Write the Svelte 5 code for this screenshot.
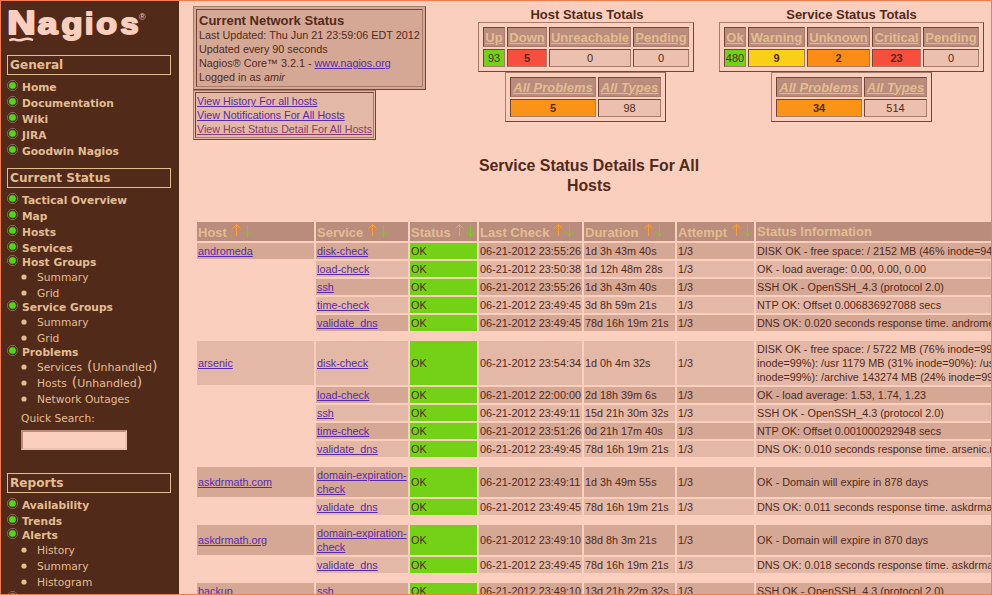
<script>
  const general = ['Home', 'Documentation', 'Wiki', 'JIRA', 'Goodwin Nagios'].map((t) => ({ t, h: 16 }));
  const status = [
    { t: 'Tactical Overview', h: 16 },
    { t: 'Map', h: 16 },
    { t: 'Hosts', h: 16 },
    { t: 'Services', h: 14 },
    { t: 'Host Groups', h: 15 },
    { t: 'Summary', h: 16, sub: true },
    { t: 'Grid', h: 14, sub: true },
    { t: 'Service Groups', h: 15 },
    { t: 'Summary', h: 16, sub: true },
    { t: 'Grid', h: 14, sub: true },
    { t: 'Problems', h: 15 },
    { t: 'Services', h: 16, sub: true, extra: 'Unhandled' },
    { t: 'Hosts', h: 16, sub: true, extra: 'Unhandled' },
    { t: 'Network Outages', h: 16, sub: true }
  ];
  const reports = [
    { t: 'Availability', h: 16 },
    { t: 'Trends', h: 14 },
    { t: 'Alerts', h: 15 },
    { t: 'History', h: 16, sub: true },
    { t: 'Summary', h: 16, sub: true },
    { t: 'Histogram', h: 16, sub: true },
    { t: '', h: 16 }
  ];

  const totals = [
    {
      title: 'Host Status Totals',
      kind: 'host',
      cells: [
        ['Up', '93', 'green'],
        ['Down', '5', 'red'],
        ['Unreachable', '0', ''],
        ['Pending', '0', '']
      ],
      sum: [
        ['All Problems', '5', 'orange'],
        ['All Types', '98', '']
      ]
    },
    {
      title: 'Service Status Totals',
      kind: 'service',
      cells: [
        ['Ok', '480', 'green'],
        ['Warning', '9', 'yellow'],
        ['Unknown', '2', 'orange deep'],
        ['Critical', '23', 'red'],
        ['Pending', '0', '']
      ],
      sum: [
        ['All Problems', '34', 'orange'],
        ['All Types', '514', '']
      ]
    }
  ];

  // label and the width it takes before its sort arrows
  const columns = [
    ['Host', 34],
    ['Service', 51],
    ['Status', 44],
    ['Last Check', 74],
    ['Duration', 59],
    ['Attempt', 54]
  ];

  const hosts = [
    {
      name: 'andromeda',
      rows: [
        ['disk-check', '23:55:26', '1d 3h 43m 40s', ['DISK OK - free space: / 2152 MB (46% inode=94%']],
        ['load-check', '23:50:38', '1d 12h 48m 28s', ['OK - load average: 0.00, 0.00, 0.00']],
        ['ssh', '23:55:26', '1d 3h 43m 40s', ['SSH OK - OpenSSH_4.3 (protocol 2.0)']],
        ['time-check', '23:49:45', '3d 8h 59m 21s', ['NTP OK: Offset 0.006836927088 secs']],
        ['validate_dns', '23:49:45', '78d 16h 19m 21s', ['DNS OK: 0.020 seconds response time. androme']]
      ]
    },
    {
      name: 'arsenic',
      rows: [
        ['disk-check', '23:54:34', '1d 0h 4m 32s', [
          'DISK OK - free space: / 5722 MB (76% inode=99%',
          'inode=99%): /usr 1179 MB (31% inode=90%): /us',
          'inode=99%): /archive 143274 MB (24% inode=99%'
        ]],
        ['load-check', '22:00:00', '2d 18h 39m 6s', ['OK - load average: 1.53, 1.74, 1.23']],
        ['ssh', '23:49:11', '15d 21h 30m 32s', ['SSH OK - OpenSSH_4.3 (protocol 2.0)']],
        ['time-check', '23:51:26', '0d 21h 17m 40s', ['NTP OK: Offset 0.001000292948 secs']],
        ['validate_dns', '23:49:45', '78d 16h 19m 21s', ['DNS OK: 0.010 seconds response time. arsenic.m']]
      ]
    },
    {
      name: 'askdrmath.com',
      rows: [
        ['domain-expiration-check', '23:49:11', '1d 3h 49m 55s', ['OK - Domain will expire in 878 days']],
        ['validate_dns', '23:49:45', '78d 16h 19m 21s', ['DNS OK: 0.011 seconds response time. askdrmat']]
      ]
    },
    {
      name: 'askdrmath.org',
      rows: [
        ['domain-expiration-check', '23:49:10', '38d 8h 3m 21s', ['OK - Domain will expire in 870 days']],
        ['validate_dns', '23:49:45', '78d 16h 19m 21s', ['DNS OK: 0.018 seconds response time. askdrmat']]
      ]
    },
    {
      name: 'backup',
      rows: [['ssh', '23:49:10', '13d 21h 22m 32s', ['SSH OK - OpenSSH_4.3 (protocol 2.0)']]]
    }
  ];

  let n = 0;
  const groups = hosts.map((h) => ({ ...h, rows: h.rows.map((r) => ({ r, dark: n++ % 2 === 0 })) }));
</script>

{#snippet menu(items)}
  <ul class="menu">
    {#each items as it}
      <li class:sub={it.sub} style="height: {it.h}px">
        {#if it.sub}
          <svg class="bullet" width="6" height="6"><circle cx="3" cy="3" r="2.6" /></svg>
        {:else}
          <svg class="dot" width="11" height="11" viewBox="0 0 11 11">
            <path d="M3.5 .5h4l3 3v4l-3 3h-4l-3-3v-4z" fill="none" stroke="#8c5c5c" />
            <circle cx="5.5" cy="5.5" r="4" fill="#3c5a12" />
            <circle cx="5.5" cy="5.5" r="3.3" fill="#50d41c" />
          </svg>
        {/if}
        <a href="#top">{it.t}</a>{#if it.extra}<span class="extra">(<a href="#top">{it.extra}</a>)</span>{/if}
      </li>
    {/each}
  </ul>
{/snippet}

{#snippet grid(cells, cls)}
  <div class="totals {cls}">
    {#each cells as c}<div class="th"><a href="#top">{c[0]}</a></div>{/each}
    {#each cells as c}<div class="td {c[2]}">{c[1]}</div>{/each}
  </div>
{/snippet}

<div class="page">
  <nav>
    <svg class="logo" width="150" height="40" viewBox="0 0 150 40">
      <g class="letters">
        <text class="cap" x="0.3" y="28" textLength="28.5" lengthAdjust="spacingAndGlyphs">N</text>
        <text x="30.8" y="28" textLength="19.7" lengthAdjust="spacingAndGlyphs">a</text>
        <text x="54.6" y="28" textLength="21" lengthAdjust="spacingAndGlyphs">g</text>
        <text x="77.9" y="28">i</text>
        <text x="89.2" y="28" textLength="20.7" lengthAdjust="spacingAndGlyphs">o</text>
        <text x="113.5" y="28" textLength="18" lengthAdjust="spacingAndGlyphs">s</text>
      </g>
      <text class="reg" x="132" y="13.5">®</text>
      <path d="M3.300 34q3-1.300 6-.2t7-.3 8.700.1" fill="none" stroke="#fbcfbe" stroke-width="2.500" stroke-linecap="round" />
    </svg>
    <h2>General</h2>
    {@render menu(general)}
    <h2 class="second">Current Status</h2>
    {@render menu(status)}
    <label class="search">Quick Search:<input type="text" /></label>
    <h2 class="third">Reports</h2>
    {@render menu(reports)}
  </nav>

  <main>
    <header>
      <div class="left">
        <div class="info">
          <div class="inner">
            <strong>Current Network Status</strong>
            <div>Last Updated: Thu Jun 21 23:59:06 EDT 2012</div>
            <div>Updated every 90 seconds</div>
            <div>Nagios® Core™ 3.2.1 - <a href="#top">www.nagios.org</a></div>
            <div>Logged in as <i>amir</i></div>
          </div>
        </div>
        <div class="links">
          <div class="inner">
            <a href="#top">View History For all hosts</a>
            <a href="#top">View Notifications For All Hosts</a>
            <a href="#top" class="visited">View Host Status Detail For All Hosts</a>
          </div>
        </div>
      </div>
      {#each totals as t}
        <section class={t.kind}>
          <h3>{t.title}</h3>
          {@render grid(t.cells, 'main-' + t.kind)}
          {@render grid(t.sum, 'sum')}
        </section>
      {/each}
    </header>

    <h1>Service Status Details For All Hosts</h1>

    <div class="table">
      <div class="row head">
        {#each columns as [label, w]}
          <div class="hc">
            <span style="width: {w}px">{label}</span>
            <svg width="21" height="13" viewBox="0 0 21 13" fill="none">
              <path d="M4.500 0v12M.5 4.500L4.500 .5l4 4" stroke="#ff9c38" />
              <path d="M15.500 1v12M11.500 8l4 4 4-4" stroke="#74d216" />
            </svg>
          </div>
        {/each}
        <div class="hc last">Status Information</div>
      </div>
      {#each groups as g}
        <div class="group">
          {#each g.rows as { r, dark }, i}
            <div class="row" class:dark>
              {#if i === 0}<div><a href="#top">{g.name}</a></div>{:else}<div class="blank"></div>{/if}
              <div><a href="#top">{r[0]}</a></div>
              <div class="ok">OK</div>
              <div class="date">06-21-2012 {r[1]}</div>
              <div class="nw">{r[2]}</div>
              <div>1/3</div>
              <div class="msg">{#each r[3] as line}<span>{line}</span>{/each}</div>
            </div>
          {/each}
        </div>
      {/each}
    </div>
  </main>
</div>

<style>
  :global(body) { margin: 0; }
  .page {
    box-sizing: border-box; width: 992px; height: 595px; overflow: hidden; display: flex;
    border: 1px solid #f57c4e; background: #fbcfbe; color: #522a1a;
    font: 10.82px/14px "Liberation Sans", Arial, sans-serif;
  }
  a { color: #5a2aaa; }
  nav {
    width: 178px; flex: none; box-sizing: border-box; padding: 5px 8px 0 6px; background: #522a1a;
    color: #e3bd92; font-family: "DejaVu Sans", Verdana, sans-serif; font-size: 10.67px;
  }
  nav a { color: inherit; text-decoration: none; }
  .logo { display: block; margin-bottom: 9px; overflow: visible; }
  .letters { font: bold 30px "Liberation Sans", Arial, sans-serif; fill: #fbcfbe; stroke: #fbcfbe; stroke-width: 2; stroke-linejoin: round; }
  .cap { font-size: 33px; }
  .reg { font: 9px "Liberation Sans", Arial, sans-serif; fill: #fbcfbe; }
  h2 {
    box-sizing: border-box; width: 164px; height: 20px; margin: 0 0 4px; padding-left: 2px;
    border: 1px solid #e3bd92; font-size: 12.1px; line-height: 19px;
  }
  .second { margin-top: 9px; }
  .third { margin-top: 23px; }
  .menu { list-style: none; margin: 0; padding: 0; }
  li { display: flex; align-items: flex-start; line-height: 18px; font-weight: bold; white-space: pre; }
  li.sub { font-weight: normal; padding-left: 14px; }
  .dot { margin: 1px 4px 0 0; flex: none; }
  .bullet { margin: 5px 10px 0 0; fill: #e3bd92; flex: none; }
  .extra { font-size: 14px; margin: -2px 0 0 5px; }
  .extra a { font-size: 11px; }
  .search { display: flex; flex-direction: column; margin: 3px 0 0 14px; line-height: 18px; }
  .search input {
    box-sizing: border-box; width: 106px; height: 20px; margin: 2px 0 0; padding: 0; background: #fbcfbe;
    border: 2px solid; border-color: #b98c7b #ecc0ae #ecc0ae #b98c7b; border-radius: 0;
  }

  main { flex: none; width: 812px; }
  header { display: flex; height: 155px; }
  .left { box-sizing: border-box; width: 299px; padding: 5px 0 0 14px; display: flex; flex-direction: column; align-items: flex-start; flex: none; }
  .info, .links { box-sizing: border-box; border: 1px solid; border-color: #a87c6b #744535 #744535 #a87c6b; white-space: nowrap; }
  .info { width: 233px; height: 84px; padding: 2px; background: #d5a896; }
  .links { width: 183px; height: 50px; padding: 1px; background: #e3b8a7; font-size: 10.7px; }
  .inner { box-sizing: border-box; height: 100%; border: 1px solid; border-color: #744535 #a87c6b #a87c6b #744535; padding: 3px 2px 0; }
  .links .inner { padding: 1px 1px 0; }
  .links a { display: block; }
  .info strong { display: block; font-size: 13px; line-height: 15px; }
  .links a.visited { color: #8a3a72; }
  section { flex: none; padding-top: 5px; }
  .host { width: 216px; margin-right: 25px; }
  .service { width: 265px; }
  h3 { margin: 0; font-size: 13px; line-height: 18px; height: 16px; text-align: center; }
  .host h3 { padding-left: 2px; }
  .totals {
    box-sizing: border-box; display: grid; grid-template-rows: 20px 18px; gap: 2px; padding: 4px; height: 50px;
    border: 1px solid; border-color: #a87c6b #744535 #744535 #a87c6b; font-size: 11px;
  }
  .main-host { grid-template-columns: 22px 40px 82px 56px; }
  .main-service { grid-template-columns: 22px 57px 63px 49px 56px; }
  .sum { width: 161px; grid-template-columns: 86px 63px; margin-left: 27px; }
  .service .sum { margin-left: 52px; }
  .th, .td {
    box-sizing: border-box; border: 1px solid; border-color: #744535 #a87c6b #a87c6b #744535;
    display: flex; justify-content: center; align-items: center; white-space: nowrap;
  }
  .th { background: #b98c7b; font-weight: bold; font-size: 13px; line-height: 18px; padding-top: 1px; }
  .th a { color: #e3bd92; }
  .sum .th { font-style: italic; }
  .td { background: #ecc0ae; }
  .green { background: #74d216; }
  .red { background: #f74e3e; font-weight: bold; }
  .orange { background: #fb9416; font-weight: bold; }
  .deep { background: #fb8c16; }
  .yellow { background: #fad016; font-weight: bold; }

  h1 { width: 230px; margin: 0 0 26px 295px; font-size: 15.9px; line-height: 20px; text-align: center; }

  .table { margin-left: 18px; }
  .row { display: grid; grid-template-columns: 117px 92px 67px 103px 91px 77px 235px; column-gap: 2px; }
  .row > div { background: #e3b8a7; padding: 1px; display: flex; align-items: center; min-width: 0; box-sizing: border-box; }
  .row.dark > div { background: #d5a896; }
  .row > div.blank { background: none; }
  .row > .ok { background: #74d216 !important; }
  .row > .date { font-size: 10.9px; white-space: nowrap; }
  .row > .nw { white-space: nowrap; }
  .row > .msg { flex-direction: column; align-items: flex-start; justify-content: center; white-space: nowrap; }
  .row > .hc { background: #b98c7b; color: #e3bd92; font-weight: bold; font-size: 13px; height: 19px; align-items: flex-start; line-height: 19px; white-space: nowrap; }
  .row > .last { line-height: 17px; }
  .hc span { flex: none; }
  .hc svg { margin: 1px 0 0; flex: none; }
  .group { display: flex; flex-direction: column; gap: 2px; margin-bottom: 10px; }
  .head { margin-bottom: 2px; }
</style>
